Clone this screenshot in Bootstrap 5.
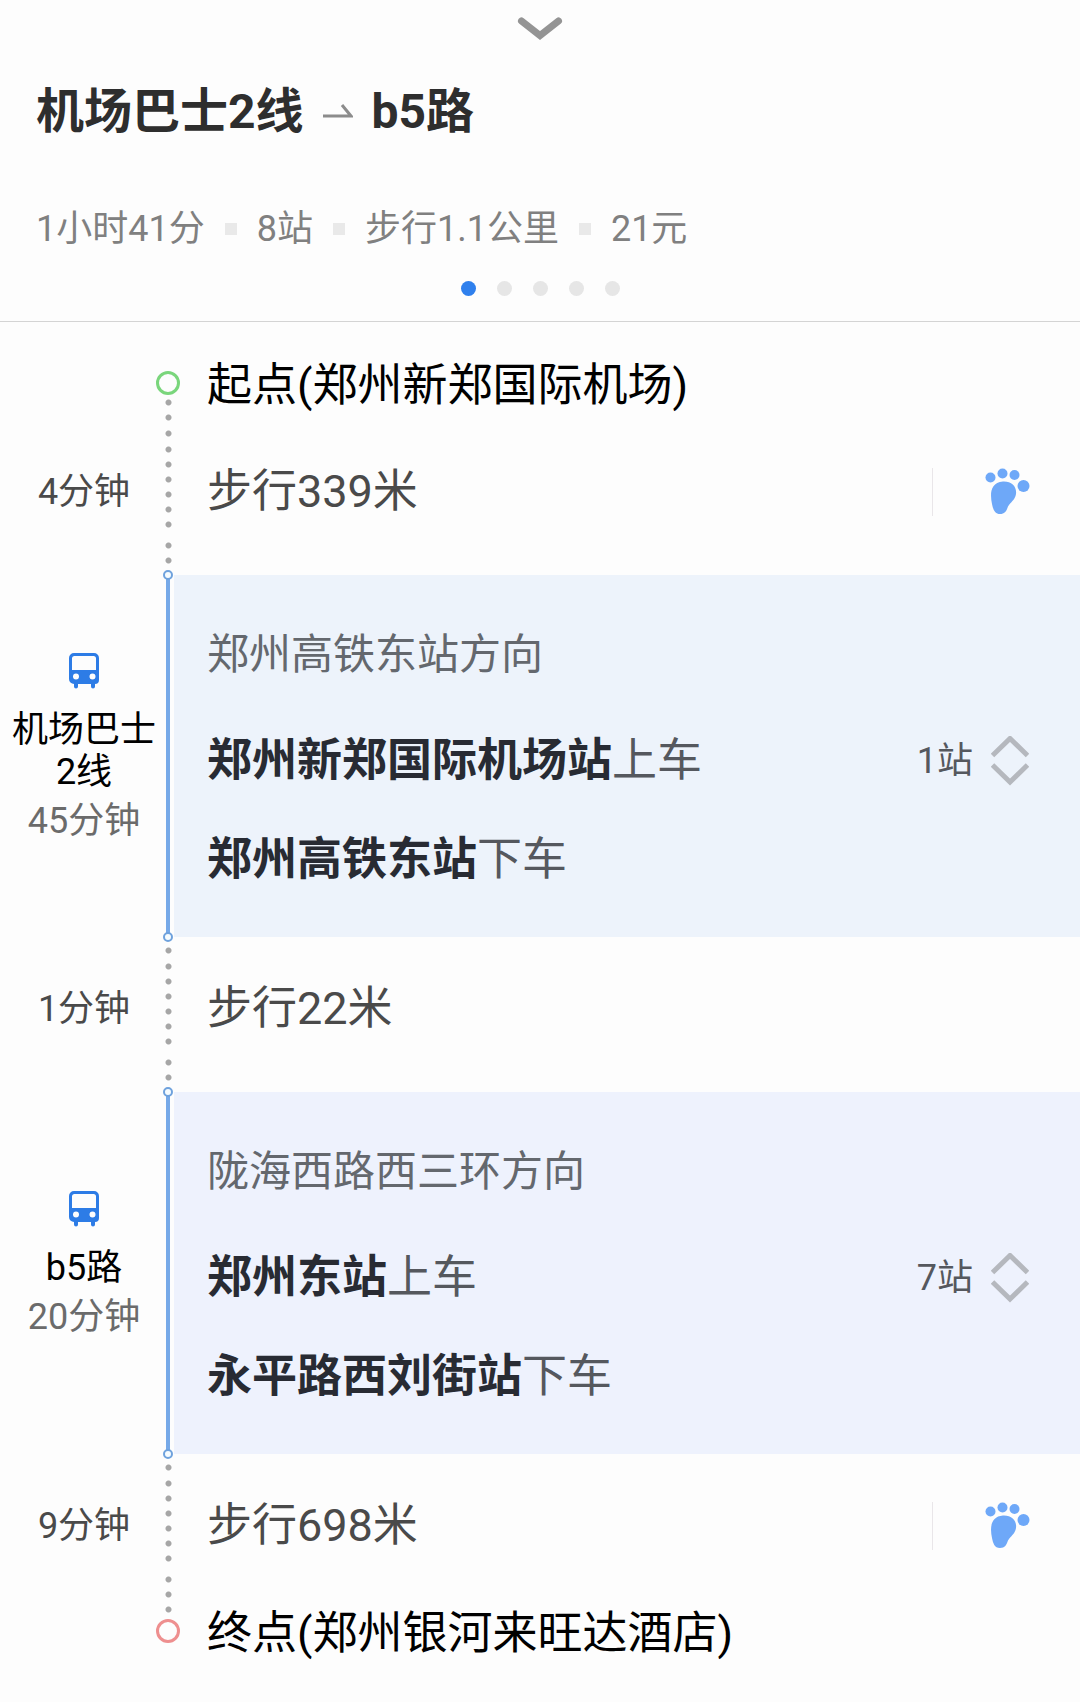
<!DOCTYPE html>
<html lang="zh-CN">
<head>
<meta charset="utf-8">
<meta name="viewport" content="width=device-width, initial-scale=1">
<title>机场巴士2线 → b5路</title>
<link rel="stylesheet" href="https://cdn.jsdelivr.net/npm/bootstrap@5.3.0/dist/css/bootstrap.min.css">
<style>
body { font-family: Roboto, "Noto Sans CJK SC", sans-serif; background: #fdfdfd; color: #000; }
svg { display: block; }
.icon-btn { background: none; border: 0; padding: 0; color: inherit; }
.route-head { padding: 16px 36px 25px; border-bottom: 1px solid #d4d4d4; }
.route-title { margin-top: 36px; gap: 19px; font-size: 48px; line-height: 68px; font-weight: 700; color: #2e2e2e; }
.summary { margin-top: 57px; gap: 20px; font-size: 36px; line-height: 52px; color: #808080; }
.sep { width: 12px; height: 12px; background: #e9e9e9; }
.pager { margin-top: 26px; gap: 21px; }
.pager button { width: 15px; height: 15px; border-radius: 50%; background: #e6e6e6; }
.pager button.active { background: #2f80ed; }

.side { width: 162px; padding: 0 6px 0 12px; font-size: 36px; line-height: 42px; text-align: center; color: #4a4a4a; }
.rail { width: 12px; }
.stop { font-size: 45px; line-height: 60px; }
.place { padding-left: 33px; }
.start-row { height: 98px; padding-top: 32px; }
.start-row .rail { padding-top: 17px; }
.start-row .place { margin-top: 2px; }
.end-row { height: 93px; }
.end-row .rail { padding-top: 10px; }
.end-row .place { margin-top: -5px; }
.ring { width: 24px; height: 24px; border: 3px solid #7ad67c; border-radius: 50%; flex: none; }
.ring.end { border-color: #ee8f8f; }
.dots { width: 7px; height: 15px; flex: none; background: radial-gradient(circle, #a6a6a6 0 2.5px, transparent 3.5px) center top / 7px 15px repeat-y; }
.dots-2 { height: 30px; }
.dots-3 { height: 45px; }
.dots-6 { height: 90px; }
.walk-row { height: 155px; }
.walk-row .rail { padding-top: 6px; }
.walk-row .rail .dots-6 { margin: 1px 0 6px; }
.walk-row .side { padding-top: 51px; }
.walk-body { height: 60px; margin-top: 42px; padding: 0 49px 0 33px; font-size: 45px; line-height: 60px; color: #4a4a4a; }
.foot { border-left: 1px solid #e9e6e9; padding-left: 52px; color: #6ea8f8; }
.ride-row { color: #55585e; }
.ride-row .side { padding-bottom: 13px; }
.line-name { margin-top: 20px; color: #000; }
.ride-time { margin-top: 3px; line-height: 50px; color: #6b6b6b; }
.ride-rail { background: linear-gradient(90deg, transparent 4px, #76a9e8 4px 8px, transparent 8px); }
.node { position: absolute; left: 1px; width: 10px; height: 10px; border: 2px solid #6fa2dd; border-radius: 50%; background: #f6fcff; z-index: 1; }
.node.top { top: -5px; }
.node.bottom { bottom: -5px; }
.ride-body { padding: 50px 51px 47px 33px; background: #edf3fb; }
.ride-body.alt { background: #eef2fd; }
.toward { font-size: 42px; line-height: 60px; color: #64686e; }
.board { margin-top: 46px; }
.alight { margin-top: 39px; }
.stop b { font-weight: 700; color: #282b33; }
.stops { gap: 18px; font-size: 36px; line-height: 60px; }
</style>
<script src="https://cdn.jsdelivr.net/npm/bootstrap@5.3.0/dist/js/bootstrap.bundle.min.js"></script>
</head>
<body>
<svg class="d-none" aria-hidden="true">
  <symbol id="bus" viewBox="0 0 30 36">
    <path fill="#2d7ce6" fill-rule="evenodd" d="M5 0h20a5 5 0 0 1 5 5v22a4 4 0 0 1-4 4v2.500a2 2 0 0 1-4 0V31H9v2.500a2 2 0 0 1-4 0V31a5 5 0 0 1-5-5V5a5 5 0 0 1 5-5zM5.500 3A2.500 2.500 0 0 0 3 5.500V17h24V5.500A2.500 2.500 0 0 0 24.500 3zM7 20.500a3 3 0 1 0 0 6 3 3 0 0 0 0-6zm16.500 0a3 3 0 1 0 0 6 3 3 0 0 0 0-6z"/>
  </symbol>
  <symbol id="foot" viewBox="0 0 46 48">
    <g fill="currentColor"><circle cx="5.500" cy="9.500" r="5"/><circle cx="17.500" cy="5.500" r="5"/><circle cx="29.500" cy="7" r="5"/><circle cx="38.500" cy="18" r="6"/>
    <path d="M18 13.500C26.500 13 32 18.500 31 26c-.8 6-5.500 8-8 12.500-1.500 4.500-3 7.500-8 7.500-5.500 0-7-5-8-10C5 26.500 5 14.500 18 13.500z"/></g>
  </symbol>
  <symbol id="updown" viewBox="0 0 38 50">
    <path d="M1.500 19.500 19 2.500l17.500 17M1.500 29 19 46l17.500-17" fill="none" stroke="#b5b8be" stroke-width="5"/>
  </symbol>
</svg>

<header class="route-head">
  <button class="icon-btn d-block mx-auto" type="button" aria-label="收起">
    <svg width="46" height="26" viewBox="0 0 46 26"><path d="M4.500 5 23 19.500 41.500 5" fill="none" stroke="#949494" stroke-width="7" stroke-linecap="round"/></svg>
  </button>
  <h1 class="route-title d-flex align-items-center mb-0">
    <span>机场巴士2线</span>
    <svg width="30" height="16" viewBox="0 0 30 16" aria-hidden="true"><path d="M0 12h28L19 1" fill="none" stroke="#8c8c8c" stroke-width="3"/></svg>
    <span>b5路</span>
  </h1>
  <div class="summary d-flex align-items-center">
    <span>1小时41分</span><i class="sep"></i><span>8站</span><i class="sep"></i><span>步行1.1公里</span><i class="sep"></i><span>21元</span>
  </div>
  <div class="pager d-flex justify-content-center">
    <button class="icon-btn active" type="button" aria-label="方案1"></button>
    <button class="icon-btn" type="button" aria-label="方案2"></button>
    <button class="icon-btn" type="button" aria-label="方案3"></button>
    <button class="icon-btn" type="button" aria-label="方案4"></button>
    <button class="icon-btn" type="button" aria-label="方案5"></button>
  </div>
</header>

<main>
<ol class="list-unstyled mb-0">
  <li class="start-row d-flex align-items-start">
    <div class="side flex-shrink-0"></div>
    <div class="rail d-flex flex-column align-items-center flex-shrink-0"><span class="ring"></span><span class="dots dots-2"></span></div>
    <div class="place stop">起点(郑州新郑国际机场)</div>
  </li>

  <li class="walk-row d-flex align-items-start">
    <div class="side flex-shrink-0">4分钟</div>
    <div class="rail d-flex flex-column align-items-center flex-shrink-0"><span class="dots"></span><span class="dots dots-6"></span><span class="dots dots-2"></span></div>
    <div class="walk-body d-flex align-items-center justify-content-between flex-grow-1">
      <span>步行339米</span>
      <button class="icon-btn foot" type="button" aria-label="步行导航"><svg width="46" height="48"><use href="#foot"/></svg></button>
    </div>
  </li>

  <li class="ride-row d-flex">
    <div class="side d-flex flex-column align-items-center justify-content-center flex-shrink-0">
      <svg width="30" height="36" aria-hidden="true"><use href="#bus"/></svg>
      <div class="line-name">机场巴士2线</div>
      <div class="ride-time">45分钟</div>
    </div>
    <div class="rail ride-rail position-relative flex-shrink-0"><span class="node top"></span><span class="node bottom"></span></div>
    <div class="ride-body flex-grow-1">
      <div class="toward">郑州高铁东站方向</div>
      <div class="board d-flex justify-content-between">
        <div class="stop"><b>郑州新郑国际机场站</b>上车</div>
        <button class="icon-btn stops d-flex align-items-center" type="button">1站<svg width="38" height="50" aria-hidden="true"><use href="#updown"/></svg></button>
      </div>
      <div class="alight stop"><b>郑州高铁东站</b>下车</div>
    </div>
  </li>

  <li class="walk-row d-flex align-items-start">
    <div class="side flex-shrink-0">1分钟</div>
    <div class="rail d-flex flex-column align-items-center flex-shrink-0"><span class="dots"></span><span class="dots dots-6"></span><span class="dots dots-2"></span></div>
    <div class="walk-body d-flex align-items-center flex-grow-1"><span>步行22米</span></div>
  </li>

  <li class="ride-row d-flex">
    <div class="side d-flex flex-column align-items-center justify-content-center flex-shrink-0">
      <svg width="30" height="36" aria-hidden="true"><use href="#bus"/></svg>
      <div class="line-name">b5路</div>
      <div class="ride-time">20分钟</div>
    </div>
    <div class="rail ride-rail position-relative flex-shrink-0"><span class="node top"></span><span class="node bottom"></span></div>
    <div class="ride-body alt flex-grow-1">
      <div class="toward">陇海西路西三环方向</div>
      <div class="board d-flex justify-content-between">
        <div class="stop"><b>郑州东站</b>上车</div>
        <button class="icon-btn stops d-flex align-items-center" type="button">7站<svg width="38" height="50" aria-hidden="true"><use href="#updown"/></svg></button>
      </div>
      <div class="alight stop"><b>永平路西刘街站</b>下车</div>
    </div>
  </li>

  <li class="walk-row d-flex align-items-start">
    <div class="side flex-shrink-0">9分钟</div>
    <div class="rail d-flex flex-column align-items-center flex-shrink-0"><span class="dots"></span><span class="dots dots-6"></span><span class="dots dots-3"></span></div>
    <div class="walk-body d-flex align-items-center justify-content-between flex-grow-1">
      <span>步行698米</span>
      <button class="icon-btn foot" type="button" aria-label="步行导航"><svg width="46" height="48"><use href="#foot"/></svg></button>
    </div>
  </li>

  <li class="end-row d-flex align-items-start">
    <div class="side flex-shrink-0"></div>
    <div class="rail d-flex flex-column align-items-center flex-shrink-0"><span class="ring end"></span></div>
    <div class="place stop">终点(郑州银河来旺达酒店)</div>
  </li>
</ol>
</main>
</body>
</html>
